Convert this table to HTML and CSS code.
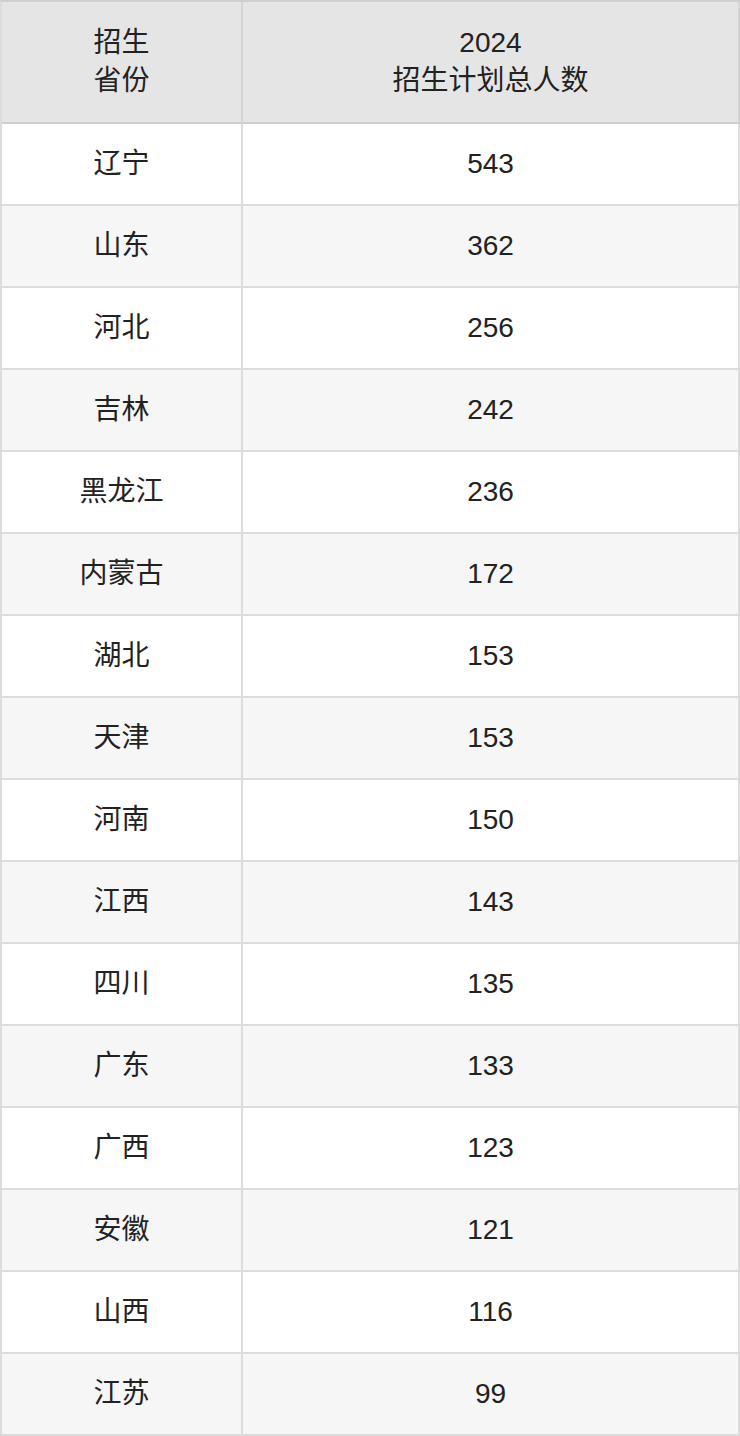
FILE: index.html
```html
<!DOCTYPE html>
<html lang="zh-CN">
<head>
<meta charset="utf-8">
<link rel="stylesheet" href="styles.css">
</head>
<body>
<div class="table">
  <div class="cell head">招生<br>省份</div>
  <div class="cell head">2024<br>招生计划总人数</div>
  <div class="cell">辽宁</div><div class="cell">543</div>
  <div class="cell alt">山东</div><div class="cell alt">362</div>
  <div class="cell">河北</div><div class="cell">256</div>
  <div class="cell alt">吉林</div><div class="cell alt">242</div>
  <div class="cell">黑龙江</div><div class="cell">236</div>
  <div class="cell alt">内蒙古</div><div class="cell alt">172</div>
  <div class="cell">湖北</div><div class="cell">153</div>
  <div class="cell alt">天津</div><div class="cell alt">153</div>
  <div class="cell">河南</div><div class="cell">150</div>
  <div class="cell alt">江西</div><div class="cell alt">143</div>
  <div class="cell">四川</div><div class="cell">135</div>
  <div class="cell alt">广东</div><div class="cell alt">133</div>
  <div class="cell">广西</div><div class="cell">123</div>
  <div class="cell alt">安徽</div><div class="cell alt">121</div>
  <div class="cell">山西</div><div class="cell">116</div>
  <div class="cell alt">江苏</div><div class="cell alt">99</div>
</div>
</body>
</html>
```
FILE: styles.css
```css
html, body {
  margin: 0;
  padding: 0;
  background: #ffffff;
}
.table {
  display: grid;
  grid-template-columns: 241px 497px;
  border-top: 2px solid #cfcfcf;
  border-left: 2px solid #dcdcdc;
  width: 738px;
  font-family: "Liberation Sans", "Noto Sans CJK SC", sans-serif;
  font-size: 28px;
  color: #222222;
}
.cell {
  height: 80px;
  display: flex;
  align-items: center;
  justify-content: center;
  text-align: center;
  border-right: 2px solid #dcdcdc;
  border-bottom: 2px solid #dcdcdc;
  background: #ffffff;
  line-height: 38px;
}
.cell.alt {
  background: #f6f6f6;
}
.cell.head {
  height: 120px;
  background: #e5e5e5;
  border-bottom-color: #cfcfcf;
  border-right-color: #d4d4d4;
}
```
